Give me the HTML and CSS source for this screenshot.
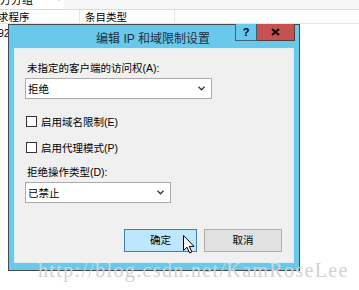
FILE: index.html
```html
<!DOCTYPE html>
<html lang="zh-CN">
<head>
	<meta charset="UTF-8">
	<title>编辑 IP 和域限制设置</title>
	<link rel="stylesheet" href="styles.css">
</head>
<body>
	<div class="page">
		<div class="tabs">
			<span class="tabName">方分组</span>
			<span class="tabMark">'</span>
		</div>
		<div class="header">
			<div class="col col1">求程序</div>
			<div class="col col2">条目类型</div>
			<div class="col col3"></div>
		</div>
		<div class="row">92</div>
	</div>

	<div class="dialog">
		<div class="titleBar">
			<span class="title">编辑 IP 和域限制设置</span>
			<div class="titleButtons">
				<div class="helpButton">?</div>
				<div class="closeButton">
					<svg width="9" height="8" viewBox="0 0 9 8"><path d="M1 1 L8 7 M8 1 L1 7" stroke="#000" stroke-width="1.8"/></svg>
				</div>
			</div>
		</div>
		<div class="client">
			<div class="label">未指定的客户端的访问权(A):</div>
			<div class="select wide">
				<span>拒绝</span>
				<svg width="7" height="5" viewBox="0 0 7 5"><path d="M0.5 0.8 L3.5 3.8 L6.5 0.8" fill="none" stroke="#333" stroke-width="1.3"/></svg>
			</div>
			<div class="checks">
				<div class="check"><span class="box"></span>启用域名限制(E)</div>
				<div class="check"><span class="box"></span>启用代理模式(P)</div>
			</div>
			<div class="label">拒绝操作类型(D):</div>
			<div class="select narrow">
				<span>已禁止</span>
				<svg width="7" height="5" viewBox="0 0 7 5"><path d="M0.5 0.8 L3.5 3.8 L6.5 0.8" fill="none" stroke="#333" stroke-width="1.3"/></svg>
			</div>
			<div class="buttons">
				<div class="button okButton">确定</div>
				<div class="button cancelButton">取消</div>
			</div>
		</div>
	</div>

	<!-- 鼠标指针 -->
	<svg class="cursor" width="12" height="19" viewBox="0 0 12 19">
		<path d="M0.5 0.5 L0.5 15.5 L4 12.2 L6.6 18 L8.8 17 L6.3 11.4 L11 11.4 Z" fill="#fff" stroke="#000" stroke-width="1" stroke-linejoin="round"/>
	</svg>

	<div class="watermark">http://blog.csdn.net/KamRoseLee</div>
</body>
</html>
```

FILE: styles.css
```css
*{
	margin: 0;
	padding: 0;
	box-sizing: border-box;
}
body{
	width: 359px;
	height: 290px;
	overflow: hidden;
	background-color: #fff;
	font-family: "Liberation Sans", "Noto Sans CJK SC", sans-serif;
	font-size: 10.5px;
	color: #000;
	position: relative;
}

/* 背后的窗口 */
.tabs{
	height: 10px;
	display: flex;
	overflow: hidden;
	background: linear-gradient(to right, #fff 64px, #f6f6f6 64px);
	border-bottom: 1px solid #dadada;
}
.tabName{
	line-height: 12px;
	margin-top: -6px;
	font-size: 11px;
	width: 58px;
}
.tabMark{
	line-height: 10px;
	margin-top: -3px;
	color: #666;
}
.header{
	display: flex;
	height: 14px;
	border-bottom: 1px solid #e5e5e5;
}
.col{
	line-height: 14px;
	border-right: 1px solid #e5e5e5;
}
.col1{
	width: 82px;
	margin-left: -2px;
}
.col2{
	width: 95px;
	padding-left: 5px;
}
.col3{
	flex: 1;
	border-right: none;
}
.row{
	line-height: 14px;
	padding-top: 2px;
	margin-left: -2px;
}

/* 对话框 */
.dialog{
	position: absolute;
	left: 8px;
	top: 24px;
	width: 292px;
	height: 247px;
	border: 1px solid #4a4a4a;
	background-color: #69c9ea;
	padding: 0 5px 7px 5px;
	display: flex;
	flex-direction: column;
}
.titleBar{
	position: relative;
	height: 23px;
	display: flex;
	align-items: center;
	justify-content: center;
}
.title{
	font-size: 12px;
	color: #1a2f44;
	margin-left: -2px;
	margin-top: 1px;
}
.titleButtons{
	position: absolute;
	top: -1px;
	right: -1px;
	display: flex;
}
.helpButton{
	width: 22px;
	height: 17px;
	border: 1px solid #3f6275;
	border-top: none;
	background-color: #69c9ea;
	font-weight: bold;
	font-size: 11px;
	line-height: 16px;
	text-align: center;
}
.closeButton{
	width: 38px;
	height: 17px;
	border: 1px solid #5a3a3a;
	border-left: none;
	border-top: none;
	background-color: #c75050;
	display: flex;
	align-items: center;
	justify-content: center;
}
.client{
	flex: 1;
	background-color: #f0f0f0;
	border: 1px solid #ddeef5;
	padding: 13px 11px 0 10px;
	display: flex;
	flex-direction: column;
}
.label{
	line-height: 12px;
	padding-left: 2px;
}
.select{
	margin-top: 4px;
	height: 21px;
	background-color: #fff;
	border: 1px solid #acacac;
	display: flex;
	align-items: center;
	justify-content: space-between;
	padding: 0 6px 0 2px;
}
.select.wide{
	width: 187px;
}
.select.narrow{
	width: 146px;
}
.checks{
	display: flex;
	flex-direction: column;
	gap: 12px;
	margin: 15px 0 12px 1px;
}
.check{
	display: flex;
	align-items: center;
	gap: 4px;
	height: 14px;
}
.box{
	width: 11px;
	height: 11px;
	border: 1px solid #333;
	background-color: #fff;
}
.buttons{
	display: flex;
	justify-content: flex-end;
	gap: 7px;
	margin-top: 26px;
}
.button{
	height: 23px;
	line-height: 21px;
	text-align: center;
	border: 1px solid #adadad;
	background-color: #e1e1e1;
}
.okButton{
	width: 73px;
	border-color: #3c7fb1;
	background-color: #bee6fd;
}
.cancelButton{
	width: 78px;
}

/* 鼠标和水印 */
.cursor{
	position: absolute;
	left: 183px;
	top: 235px;
}
.watermark{
	position: absolute;
	left: 38px;
	top: 259px;
	font-family: "Liberation Serif", serif;
	font-size: 20px;
	letter-spacing: 1.35px;
	color: #d2d2d2;
	white-space: nowrap;
}
```
